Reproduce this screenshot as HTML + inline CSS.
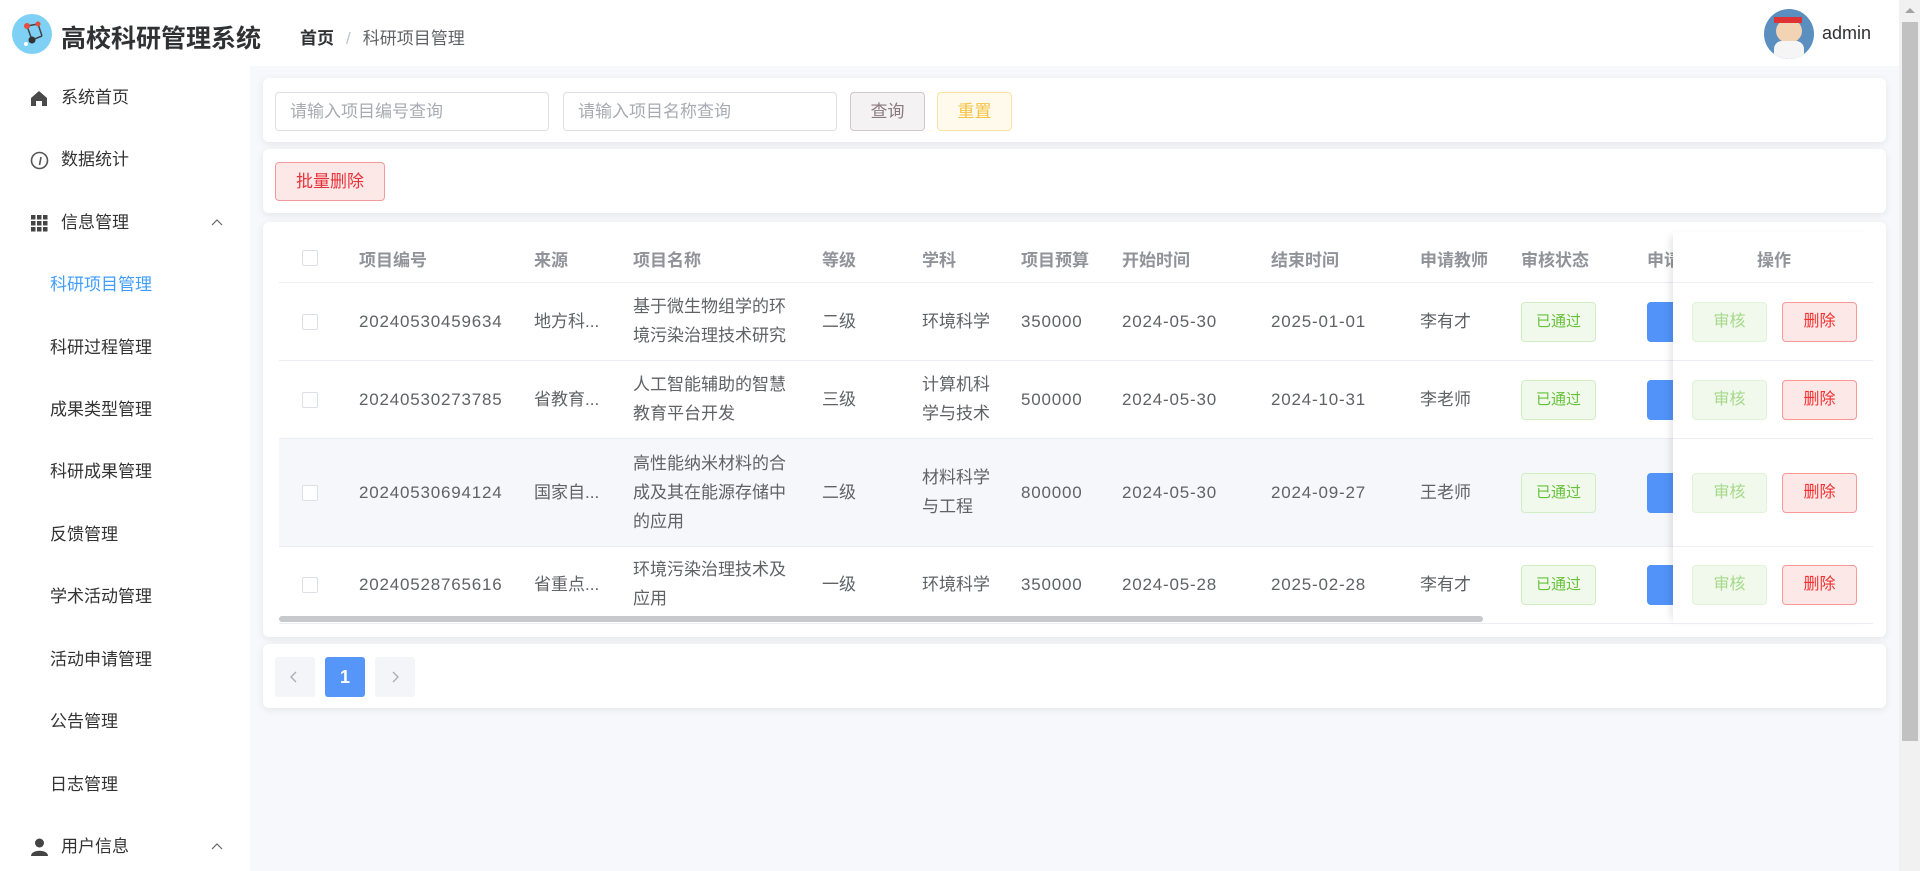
<!DOCTYPE html>
<html><head><meta charset="utf-8">
<style>
*{box-sizing:border-box;margin:0;padding:0}
body{width:1920px;height:871px;overflow:hidden;background:#fff;font-family:"Liberation Sans","Noto Sans CJK SC",sans-serif;color:#606266;position:relative}
.a{position:absolute}
.hdr{left:0;top:0;width:1899px;height:66px;background:#fff}
.side{left:0;top:66px;width:250px;height:805px;background:#fff}
.main{left:250px;top:66px;width:1649px;height:805px;background:#f7f8fc}
.card{background:#fff;border-radius:6px;box-shadow:0 2px 8px rgba(0,0,0,.08)}
.mi{left:0;width:250px;height:40px;line-height:40px;font-size:17px;color:#333}
.mi .t{position:absolute;left:61px}
.sub{position:absolute;left:50px}
.inp{border:1px solid #dcdfe6;border-radius:4px;height:39px;line-height:37px;padding-left:14px;font-size:17px;color:#a8abb2;background:#fff}
.btn{border-radius:4px;height:39px;line-height:37px;text-align:center;font-size:17px}
.th{font-size:17px;font-weight:bold;color:#909399;top:246px}
.td{font-size:17px;color:#606266;line-height:29px}
.n{letter-spacing:0.8px}
.cb{width:16px;height:16px;border:1px solid #dcdfe6;border-radius:2px;background:#fff}
.tag{width:75px;height:40px;line-height:38px;text-align:center;border:1px solid #d1edc4;background:#f0f9eb;color:#67c23a;font-size:15px;border-radius:4px}
.ab1{width:75px;height:40px;line-height:38px;text-align:center;border:1px solid #e1f3d8;background:#f0f9eb;color:#a6d98b;font-size:16px;border-radius:4px}
.ab2{width:75px;height:40px;line-height:38px;text-align:center;border:1px solid #f89898;background:#fde8e8;color:#f23030;font-size:16px;border-radius:4px}
.blue{width:40px;height:40px;background:#5193f8;border-radius:4px}
.line{height:1px;background:#ebeef5}
</style></head><body>
<div class="a hdr"></div>
<div class="a" style="left:12px;top:14px;width:40px;height:40px;border-radius:50%;background:#7fd0f5"></div>
<svg class="a" style="left:12px;top:14px" width="40" height="40"><path d="M15 12 L26 10 L30 22 M15 12 L20 26 L30 22" stroke="#444" stroke-width="1.5" fill="none"/><circle cx="15" cy="12" r="3" fill="#e84b3c"/><circle cx="26" cy="10" r="2.5" fill="#e84b3c"/><circle cx="20" cy="26" r="3.5" fill="#333"/><circle cx="14" cy="30" r="2" fill="#fff"/></svg>
<div class="a" style="left:61px;top:19px;font-size:25px;font-weight:bold;color:#303133">高校科研管理系统</div>
<div class="a" style="left:300px;top:24px;font-size:17px;color:#303133"><b>首页</b><span style="color:#c0c4cc;margin:0 12px">/</span><span style="color:#606266">科研项目管理</span></div>
<div class="a" style="left:1764px;top:9px;width:50px;height:50px;border-radius:50%;background:#5b8fc0;overflow:hidden"><div style="position:absolute;left:12px;top:10px;width:26px;height:24px;border-radius:50%;background:#f2d3b3"></div><div style="position:absolute;left:10px;top:32px;width:30px;height:20px;background:#f5f5f5;border-radius:8px 8px 0 0"></div><div style="position:absolute;left:10px;top:8px;width:28px;height:6px;background:#d33"></div></div>
<div class="a" style="left:1822px;top:23px;font-size:18px;color:#303133">admin</div>
<div class="a" style="left:1899px;top:0;width:21px;height:871px;background:#f1f1f1"></div>
<div class="a" style="left:1902px;top:22px;width:16px;height:719px;background:#c1c1c1"></div>
<div class="a" style="left:1905px;top:8px;width:0;height:0;border-left:5px solid transparent;border-right:5px solid transparent;border-bottom:5px solid #a3a3a3"></div>

<div class="a side"></div>
<div class="a mi" style="top:78px"><svg class="a" style="left:30px;top:12px" width="18" height="17"><path d="M9 1 L1 8 V16 H6 V11 H12 V16 H17 V8 Z" fill="#4a4a4a"/></svg><span class="t">系统首页</span></div>
<div class="a mi" style="top:140px"><svg class="a" style="left:30px;top:11px" width="19" height="19"><circle cx="9.5" cy="9.5" r="8" stroke="#555" stroke-width="1.6" fill="none"/><path d="M9.5 14 L11 6" stroke="#555" stroke-width="1.6"/></svg><span class="t">数据统计</span></div>
<div class="a mi" style="top:203px"><svg class="a" style="left:31px;top:12px" width="17" height="17" fill="#444"><rect x="0" y="0" width="4.5" height="4.5"/><rect x="6" y="0" width="4.5" height="4.5"/><rect x="12" y="0" width="4.5" height="4.5"/><rect x="0" y="6" width="4.5" height="4.5"/><rect x="6" y="6" width="4.5" height="4.5"/><rect x="12" y="6" width="4.5" height="4.5"/><rect x="0" y="12" width="4.5" height="4.5"/><rect x="6" y="12" width="4.5" height="4.5"/><rect x="12" y="12" width="4.5" height="4.5"/></svg><span class="t">信息管理</span><svg class="a" style="left:211px;top:15px" width="12" height="8"><path d="M1 7 L6 2 L11 7" stroke="#666" stroke-width="1.2" fill="none"/></svg></div>
<div class="a mi" style="top:265px"><span class="sub" style="color:#409eff">科研项目管理</span></div>
<div class="a mi" style="top:328px"><span class="sub">科研过程管理</span></div>
<div class="a mi" style="top:390px"><span class="sub">成果类型管理</span></div>
<div class="a mi" style="top:452px"><span class="sub">科研成果管理</span></div>
<div class="a mi" style="top:515px"><span class="sub">反馈管理</span></div>
<div class="a mi" style="top:577px"><span class="sub">学术活动管理</span></div>
<div class="a mi" style="top:640px"><span class="sub">活动申请管理</span></div>
<div class="a mi" style="top:702px"><span class="sub">公告管理</span></div>
<div class="a mi" style="top:765px"><span class="sub">日志管理</span></div>
<div class="a mi" style="top:827px"><svg class="a" style="left:31px;top:11px" width="17" height="18" fill="#444"><circle cx="8.5" cy="5" r="4.5"/><path d="M0 18 C0 11 17 11 17 18 Z"/></svg><span class="t">用户信息</span><svg class="a" style="left:211px;top:15px" width="12" height="8"><path d="M1 7 L6 2 L11 7" stroke="#666" stroke-width="1.2" fill="none"/></svg></div>

<div class="a main"></div>
<div class="a card" style="left:263px;top:78px;width:1623px;height:64px"></div>
<div class="a inp" style="left:275px;top:92px;width:274px">请输入项目编号查询</div>
<div class="a inp" style="left:563px;top:92px;width:274px">请输入项目名称查询</div>
<div class="a btn" style="left:850px;top:92px;width:75px;border:1px solid #cfc8cc;background:#f4f2f3;color:#8a7a80">查询</div>
<div class="a btn" style="left:937px;top:92px;width:75px;border:1px solid #fbe3a0;background:#fffaec;color:#f5c343">重置</div>

<div class="a card" style="left:263px;top:149px;width:1623px;height:64px"></div>
<div class="a btn" style="left:275px;top:162px;width:110px;border:1px solid #f39a9a;background:#fde8e8;color:#e8323a">批量删除</div>

<div class="a card" style="left:263px;top:222px;width:1623px;height:415px"></div>
<div class="a" style="left:279px;top:438px;width:1594px;height:108px;background:#f5f7fa"></div>
<div class="a line" style="left:279px;top:282px;width:1594px"></div>
<div class="a line" style="left:279px;top:360px;width:1594px"></div>
<div class="a line" style="left:279px;top:438px;width:1594px"></div>
<div class="a line" style="left:279px;top:546px;width:1594px"></div>
<div class="a line" style="left:279px;top:623px;width:1594px"></div>

<div class="a cb" style="left:302px;top:250px"></div>
<div class="a th" style="left:359px">项目编号</div>
<div class="a th" style="left:534px">来源</div>
<div class="a th" style="left:633px">项目名称</div>
<div class="a th" style="left:822px">等级</div>
<div class="a th" style="left:922px">学科</div>
<div class="a th" style="left:1021px">项目预算</div>
<div class="a th" style="left:1122px">开始时间</div>
<div class="a th" style="left:1271px">结束时间</div>
<div class="a th" style="left:1420px">申请教师</div>
<div class="a th" style="left:1521px">审核状态</div>
<div class="a th" style="left:1647px;width:26px;overflow:hidden;white-space:nowrap">申请</div>

<div class="a cb" style="left:302px;top:314px"></div>
<div class="a td n" style="left:359px;top:307px">20240530459634</div>
<div class="a td" style="left:534px;top:307px">地方科...</div>
<div class="a td" style="left:633px;top:292px">基于微生物组学的环<br>境污染治理技术研究</div>
<div class="a td" style="left:822px;top:307px">二级</div>
<div class="a td" style="left:922px;top:307px">环境科学</div>
<div class="a td n" style="left:1021px;top:307px">350000</div>
<div class="a td n" style="left:1122px;top:307px">2024-05-30</div>
<div class="a td n" style="left:1271px;top:307px">2025-01-01</div>
<div class="a td" style="left:1420px;top:307px">李有才</div>
<div class="a tag" style="left:1521px;top:302px">已通过</div>
<div class="a blue" style="left:1647px;top:302px"></div>

<div class="a cb" style="left:302px;top:392px"></div>
<div class="a td n" style="left:359px;top:385px">20240530273785</div>
<div class="a td" style="left:534px;top:385px">省教育...</div>
<div class="a td" style="left:633px;top:370px">人工智能辅助的智慧<br>教育平台开发</div>
<div class="a td" style="left:822px;top:385px">三级</div>
<div class="a td" style="left:922px;top:370px">计算机科<br>学与技术</div>
<div class="a td n" style="left:1021px;top:385px">500000</div>
<div class="a td n" style="left:1122px;top:385px">2024-05-30</div>
<div class="a td n" style="left:1271px;top:385px">2024-10-31</div>
<div class="a td" style="left:1420px;top:385px">李老师</div>
<div class="a tag" style="left:1521px;top:380px">已通过</div>
<div class="a blue" style="left:1647px;top:380px"></div>

<div class="a cb" style="left:302px;top:485px"></div>
<div class="a td n" style="left:359px;top:478px">20240530694124</div>
<div class="a td" style="left:534px;top:478px">国家自...</div>
<div class="a td" style="left:633px;top:449px">高性能纳米材料的合<br>成及其在能源存储中<br>的应用</div>
<div class="a td" style="left:822px;top:478px">二级</div>
<div class="a td" style="left:922px;top:463px">材料科学<br>与工程</div>
<div class="a td n" style="left:1021px;top:478px">800000</div>
<div class="a td n" style="left:1122px;top:478px">2024-05-30</div>
<div class="a td n" style="left:1271px;top:478px">2024-09-27</div>
<div class="a td" style="left:1420px;top:478px">王老师</div>
<div class="a tag" style="left:1521px;top:473px">已通过</div>
<div class="a blue" style="left:1647px;top:473px"></div>

<div class="a cb" style="left:302px;top:577px"></div>
<div class="a td n" style="left:359px;top:570px">20240528765616</div>
<div class="a td" style="left:534px;top:570px">省重点...</div>
<div class="a td" style="left:633px;top:555px">环境污染治理技术及<br>应用</div>
<div class="a td" style="left:822px;top:570px">一级</div>
<div class="a td" style="left:922px;top:570px">环境科学</div>
<div class="a td n" style="left:1021px;top:570px">350000</div>
<div class="a td n" style="left:1122px;top:570px">2024-05-28</div>
<div class="a td n" style="left:1271px;top:570px">2025-02-28</div>
<div class="a td" style="left:1420px;top:570px">李有才</div>
<div class="a tag" style="left:1521px;top:565px">已通过</div>
<div class="a blue" style="left:1647px;top:565px"></div>

<div class="a" style="left:279px;top:616px;width:1204px;height:6px;border-radius:3px;background:#c8c9cc"></div>

<div class="a" style="left:1673px;top:232px;width:200px;height:391px;background:#fff;box-shadow:-6px 0 8px -4px rgba(0,0,0,.12)"></div>
<div class="a line" style="left:1673px;top:282px;width:200px"></div>
<div class="a line" style="left:1673px;top:360px;width:200px"></div>
<div class="a line" style="left:1673px;top:438px;width:200px"></div>
<div class="a line" style="left:1673px;top:546px;width:200px"></div>
<div class="a line" style="left:1673px;top:623px;width:200px"></div>
<div class="a th" style="left:1757px">操作</div>
<div class="a ab1" style="left:1692px;top:302px">审核</div><div class="a ab2" style="left:1782px;top:302px">删除</div>
<div class="a ab1" style="left:1692px;top:380px">审核</div><div class="a ab2" style="left:1782px;top:380px">删除</div>
<div class="a ab1" style="left:1692px;top:473px">审核</div><div class="a ab2" style="left:1782px;top:473px">删除</div>
<div class="a ab1" style="left:1692px;top:565px">审核</div><div class="a ab2" style="left:1782px;top:565px">删除</div>

<div class="a card" style="left:263px;top:644px;width:1623px;height:64px"></div>
<div class="a" style="left:275px;top:657px;width:40px;height:40px;background:#f4f5f8;border-radius:3px"></div>
<svg class="a" style="left:289px;top:671px" width="10" height="12"><path d="M7 1 L2 6 L7 11" stroke="#a8abb2" stroke-width="1.3" fill="none"/></svg>
<div class="a" style="left:325px;top:657px;width:40px;height:40px;background:#5596f8;border-radius:3px;color:#fff;font-weight:bold;font-size:18px;text-align:center;line-height:40px">1</div>
<div class="a" style="left:375px;top:657px;width:40px;height:40px;background:#f4f5f8;border-radius:3px"></div>
<svg class="a" style="left:391px;top:671px" width="10" height="12"><path d="M2 1 L7 6 L2 11" stroke="#a8abb2" stroke-width="1.3" fill="none"/></svg>
</body></html>
